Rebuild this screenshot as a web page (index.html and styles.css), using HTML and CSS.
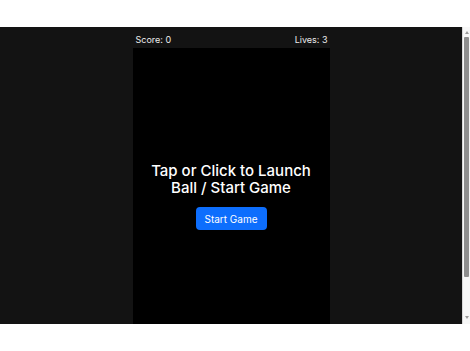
FILE: index.html
```html
<!DOCTYPE html>
<html>
<head>
<meta charset="utf-8">
<link rel="stylesheet" href="styles.css">
</head>
<body>
<div class="frame">
  <div class="viewport">
    <div class="game">
      <div class="hud">
        <span>Score: 0</span>
        <span>Lives: 3</span>
      </div>
      <div class="board">
        <div class="overlay">
          <h2 class="title">Tap or Click to Launch Ball / Start Game</h2>
          <button class="start">Start Game</button>
        </div>
      </div>
    </div>
  </div>
  <div class="scrollbar">
    <span class="arrow up"></span>
    <div class="track"><div class="thumb"></div></div>
    <span class="arrow down"></span>
  </div>
</div>
</body>
</html>
```
FILE: styles.css
```css
html, body {
  margin: 0;
  padding: 0;
  background: #ffffff;
}
body {
  padding-top: 27px;
  font-family: Inter, "Liberation Sans", sans-serif;
}
.frame {
  display: flex;
  height: 297px;
  background: #131313;
}
.viewport {
  flex: 1;
  overflow: hidden;
}
.scrollbar {
  width: 8px;
  background: #f7f7f7;
  border-left: 1px solid #d8d8d8;
  box-sizing: border-box;
  display: flex;
  flex-direction: column;
  align-items: center;
  padding: 4px 0 5px;
}
.arrow {
  width: 0;
  height: 0;
  border-left: 2.5px solid transparent;
  border-right: 2.5px solid transparent;
}
.arrow.up {
  border-bottom: 3px solid #9a9a9a;
}
.arrow.down {
  border-top: 3px solid #9a9a9a;
}
.track {
  flex: 1;
  width: 100%;
  padding: 3px 0 0;
  display: flex;
  justify-content: center;
}
.thumb {
  width: 5px;
  height: 240px;
  background: #8e8e8e;
  border-radius: 1px;
}
.game {
  width: 197px;
  margin: 0 auto;
  padding-bottom: 32px;
}
.hud {
  display: flex;
  justify-content: space-between;
  padding: 4px 2px 0 3px;
  height: 17px;
  font-size: 9px;
  font-weight: 400;
  line-height: 17px;
  color: #ececec;
}
.board {
  height: 296px;
  background: #000;
  display: flex;
  align-items: center;
  justify-content: center;
}
.overlay {
  display: flex;
  flex-direction: column;
  align-items: center;
  text-align: center;
  padding: 0 14px;
}
.title {
  margin: 0 0 11px;
  font-size: 15px;
  font-weight: 500;
  line-height: 17px;
  color: #fff;
}
.start {
  font-family: inherit;
  font-size: 10px;
  color: #fff;
  background: #0d6efd;
  border: none;
  border-radius: 4px;
  width: 71px;
  height: 23px;
  padding: 0;
}
```
